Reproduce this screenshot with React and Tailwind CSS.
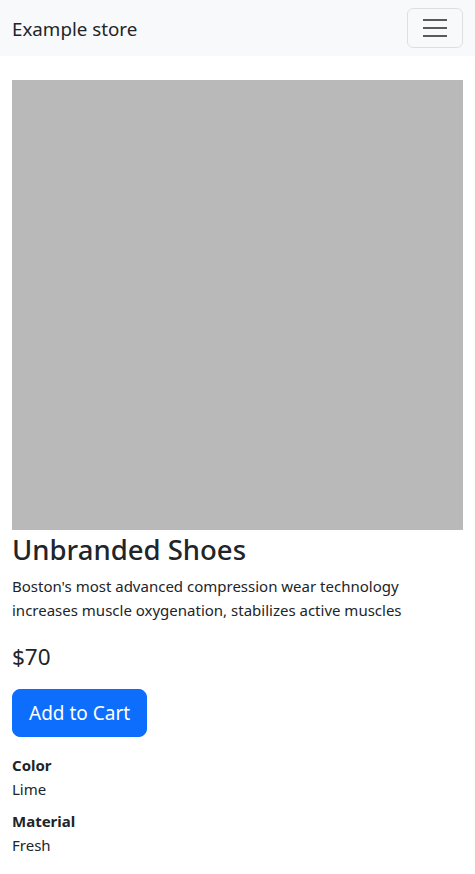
import React from 'react';

const App = () => {
  return (
    <div className="min-h-screen bg-white text-[#212529]" style={{ fontFamily: '"Noto Sans", sans-serif' }}>
      <nav className="h-14 bg-[#f8f9fa] px-3 flex items-center justify-between">
        <a href="#" className="text-[18.75px] leading-[30px] mt-[2px] text-[#212529]">Example store</a>
        <button className="w-[56px] h-[40px] border border-[rgba(0,0,0,0.1)] rounded-md flex items-center justify-center">
          <svg width="24" height="18" viewBox="0 0 24 18">
            <path d="M0 1h24M0 9h24M0 17h24" stroke="rgba(33,37,41,0.75)" strokeWidth="2" />
          </svg>
        </button>
      </nav>

      <main className="px-3 pt-6">
        <div className="w-full h-[450px] bg-[#b9b9b9]" />
        <h2 className="text-[27.5px] leading-[36px] font-medium mt-[2px] mb-[6px]">Unbranded Shoes</h2>
        <p className="text-[15px] leading-6 mb-5">
          Boston's most advanced compression wear technology increases muscle oxygenation, stabilizes active muscles
        </p>
        <div className="text-[22.5px] leading-[29px] mb-[18px]">$70</div>
        <button className="bg-[#0d6efd] text-white text-[19px] leading-[30px] px-4 py-2 rounded-lg border border-[#0d6efd]">
          Add to Cart
        </button>
        <div className="mt-4 text-[15px]">
          <div className="mb-2">
            <div className="font-bold leading-6">Color</div>
            <div className="leading-6">Lime</div>
          </div>
          <div>
            <div className="font-bold leading-6">Material</div>
            <div className="leading-6">Fresh</div>
          </div>
        </div>
      </main>
    </div>
  );
};

export default App;
